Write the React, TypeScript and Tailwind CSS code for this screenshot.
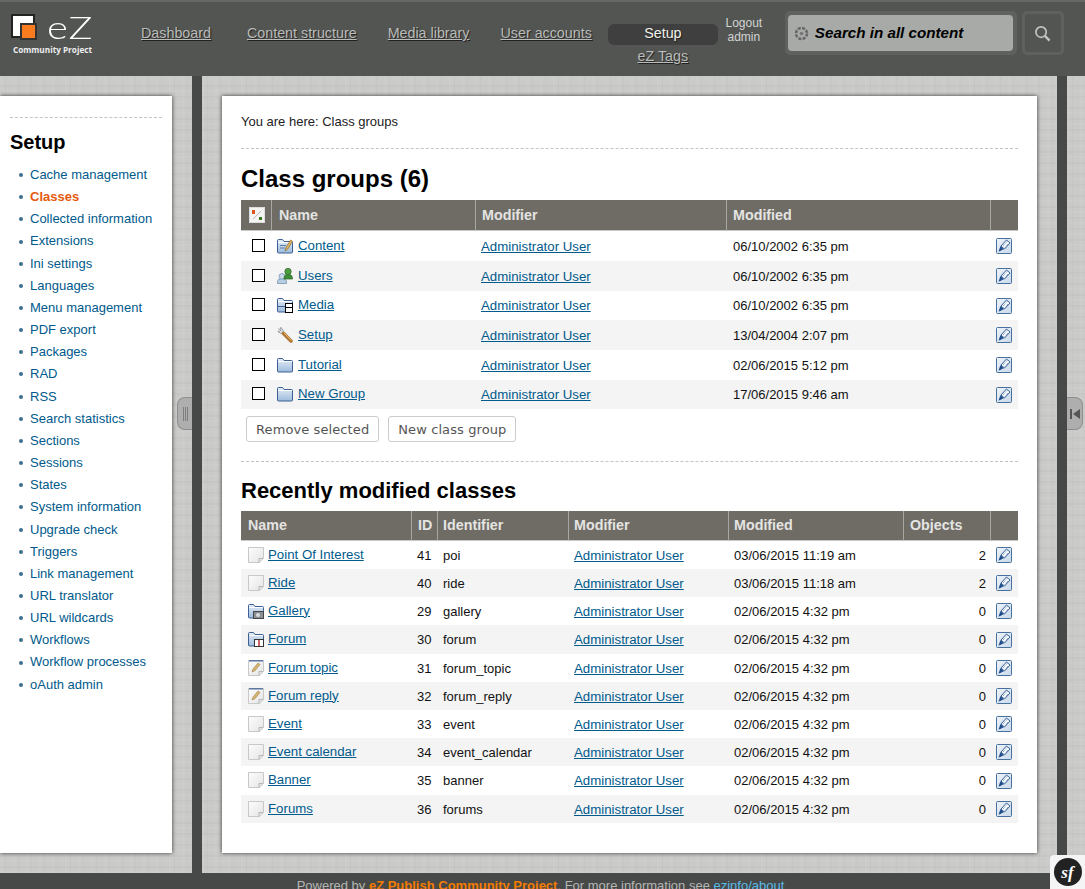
import React from "react";

const linen =
  "bg-[#cacac8] bg-[image:repeating-linear-gradient(0deg,rgba(255,255,255,.04)_0_2px,transparent_2px_5px,rgba(0,0,0,.02)_5px_7px,transparent_7px_11px),repeating-linear-gradient(90deg,rgba(255,255,255,.04)_0_2px,transparent_2px_5px,rgba(0,0,0,.025)_5px_6px,transparent_6px_13px)]";
const link = "text-[13.25px] text-[#005a8c] underline";

function Folder({ children }: { children?: React.ReactNode }) {
  return (
    <svg width="16" height="16" viewBox="0 0 16 16" className="block">
      <defs>
        <linearGradient id="fg" x1="0" y1="0" x2="0" y2="1">
          <stop offset="0" stopColor="#e3edf7" />
          <stop offset="1" stopColor="#9dbbdc" />
        </linearGradient>
      </defs>
      <path d="M.5 14V2.500q0-1 1-1h4l1.500 2h7.500q1 0 1 1V14q0 1-1 1h-13q-1 0-1-1z" fill="url(#fg)" stroke="#3d5f94" />
      <path d="M1 4.500h14" stroke="#fff" />
      {children}
    </svg>
  );
}

function Page({ pencil }: { pencil?: boolean }) {
  return (
    <svg width="16" height="16" viewBox="0 0 16 16" className="block">
      <defs>
        <linearGradient id="pg" x1="0" y1="0" x2="1" y2="1">
          <stop offset="0" stopColor="#fdfdfd" />
          <stop offset="1" stopColor="#e4e4e4" />
        </linearGradient>
      </defs>
      <path d="M.5.500h15v11l-4 4H.5z" fill="url(#pg)" stroke="#c8c8c8" />
      <path d="M15 11.500h-4v4" fill="#e6e6e6" stroke="#b5b5b5" />
      {pencil && <path d="M1 .800h14" stroke="#51709f" strokeWidth="1.400" />}
      {pencil && <path d="M4 12l1-3 5-6 2 1.500-5 6.200z" fill="#d7b46c" stroke="#9c8350" strokeWidth=".6" />}
    </svg>
  );
}

function RowIcon({ kind }: { kind: string }) {
  if (kind === "page") return <Page />;
  if (kind === "pencil") return <Page pencil />;
  if (kind === "folder") return <Folder />;
  if (kind === "content")
    return (
      <Folder>
        <path d="M3 7.500h6M3 10h5" stroke="#5f7ea8" />
        <path d="M8 13l1-3.500 4.500-7.500 2 1.200-4.500 7.600z" fill="#e0b45c" stroke="#8b6d33" strokeWidth=".7" />
      </Folder>
    );
  if (kind === "media")
    return (
      <Folder>
        <path d="M1 9.500h7" stroke="#3d5f94" />
        <rect x="8.500" y="6.500" width="7" height="9" fill="#fff" stroke="#000" />
        <path d="M8.500 10.500h7" stroke="#000" />
      </Folder>
    );
  if (kind === "gallery")
    return (
      <Folder>
        <rect x="5.500" y="8.500" width="10" height="7" fill="#8b8f92" stroke="#44484c" />
        <circle cx="10" cy="12" r="2" fill="#d9dcde" />
      </Folder>
    );
  if (kind === "forum")
    return (
      <Folder>
        <rect x="6.500" y="8.500" width="9" height="7" fill="#fff" stroke="#333" />
        <path d="M11 9v6" stroke="#b4232a" strokeWidth="1.400" />
      </Folder>
    );
  if (kind === "users")
    return (
      <svg width="16" height="16" viewBox="0 0 16 16" className="block">
        <circle cx="5" cy="8.500" r="3" fill="#c8d9ea" stroke="#6c8bab" strokeWidth=".7" />
        <path d="M.5 15.500v-2q0-2.500 3-2.500h3q3 0 3 2.500v2z" fill="#b7cde2" stroke="#6c8bab" strokeWidth=".7" />
        <circle cx="11" cy="3.500" r="3.200" fill="#4f9b41" stroke="#2a6a25" strokeWidth=".7" />
        <path d="M7 11q0-4.500 3-4.500h2q3.500 0 3.500 4.500z" fill="#3f8c36" stroke="#2a6a25" strokeWidth=".7" />
      </svg>
    );
  return (
    <svg width="16" height="16" viewBox="0 0 16 16" className="block">
      <path d="M1 1.500l2.500 2M.8 4.500l3 2 2-.5.500-2-1.800-3.200-1.500 0 1 2.200-1.200 1.200z" fill="#dfe2e5" stroke="#8c9298" strokeWidth=".8" />
      <path d="M6.500 6.500l7.500 7.500" stroke="#b07a36" strokeWidth="3.600" strokeLinecap="round" />
      <path d="M7 6l7.500 7.500" stroke="#e0b070" strokeWidth="1" />
    </svg>
  );
}

function EditIcon() {
  return (
    <svg width="16" height="16" viewBox="0 0 16 16" className="block">
      <defs>
        <linearGradient id="eg" x1="0" y1="0" x2="1" y2="1">
          <stop offset="0" stopColor="#eef3f9" />
          <stop offset="1" stopColor="#c9d9ea" />
        </linearGradient>
      </defs>
      <rect x=".5" y=".5" width="15" height="15" rx="1" fill="url(#eg)" stroke="#47709f" />
      <path d="M5 8l5.500-6 3.500 3-5.500 6z" fill="#fff" stroke="#1f4e8a" strokeWidth=".9" />
      <path d="M7 8l4-4.500M9 9.500l3.500-4" stroke="#5d86b8" strokeWidth="1" strokeDasharray="1 .8" />
      <path d="M2.500 13.500l2-5.500 3.500 3.200-2 .800-1.500 1z" fill="#1f4e8a" />
    </svg>
  );
}

const groups = [
  ["Content", "content", "06/10/2002 6:35 pm", "h-[30px]"],
  ["Users", "users", "06/10/2002 6:35 pm", "h-[30px]"],
  ["Media", "media", "06/10/2002 6:35 pm", "h-[29px]"],
  ["Setup", "wrench", "13/04/2004 2:07 pm", "h-[30px]"],
  ["Tutorial", "folder", "02/06/2015 5:12 pm", "h-[30px]"],
  ["New Group", "folder", "17/06/2015 9:46 am", "h-[29px]"],
];

const classes = [
  ["Point Of Interest", "page", "41", "poi", "03/06/2015 11:19 am", "2", "h-[28px]"],
  ["Ride", "page", "40", "ride", "03/06/2015 11:18 am", "2", "h-[28px]"],
  ["Gallery", "gallery", "29", "gallery", "02/06/2015 4:32 pm", "0", "h-[28px]"],
  ["Forum", "forum", "30", "forum", "02/06/2015 4:32 pm", "0", "h-[29px]"],
  ["Forum topic", "pencil", "31", "forum_topic", "02/06/2015 4:32 pm", "0", "h-[28px]"],
  ["Forum reply", "pencil", "32", "forum_reply", "02/06/2015 4:32 pm", "0", "h-[28px]"],
  ["Event", "page", "33", "event", "02/06/2015 4:32 pm", "0", "h-[28px]"],
  ["Event calendar", "page", "34", "event_calendar", "02/06/2015 4:32 pm", "0", "h-[28px]"],
  ["Banner", "page", "35", "banner", "02/06/2015 4:32 pm", "0", "h-[29px]"],
  ["Forums", "page", "36", "forums", "02/06/2015 4:32 pm", "0", "h-[28px]"],
];

const sideItems = [
  "Cache management", "Classes", "Collected information", "Extensions", "Ini settings", "Languages",
  "Menu management", "PDF export", "Packages", "RAD", "RSS", "Search statistics", "Sections", "Sessions",
  "States", "System information", "Upgrade check", "Triggers", "Link management", "URL translator",
  "URL wildcards", "Workflows", "Workflow processes", "oAuth admin",
];

function Th({ children, className = "" }: { children?: React.ReactNode; className?: string }) {
  return (
    <th className={`border-b border-l border-b-[#c9c9c7] border-l-[#a9a7a3] first:border-l-0 px-[6px] text-left font-bold text-[14.3px] text-[#e4e4e2] ${className}`}>
      {children}
    </th>
  );
}

function Gutter() {
  return <div className="w-[10px] shrink-0 bg-[#464947]" />;
}

function NameCell({ name, icon, gap }: { name: string; icon: string; gap: string }) {
  return (
    <span className={`flex items-center -translate-y-px ${gap}`}>
      <RowIcon kind={icon} />
      <a className={link}>{name}</a>
    </span>
  );
}

export default function App() {
  return (
    <div className="relative flex h-[889px] w-[1085px] flex-col overflow-hidden bg-[#535553] font-['Liberation_Sans',Arial,sans-serif] text-[13px] text-[#111]">
      {/* header */}
      <header className="flex h-[76px] shrink-0 items-start border-t-2 border-[#666866] bg-[#535553]">
        <div className="ml-[11px] mt-[11px] w-[95px] shrink-0">
          <div className="flex h-[27px] items-center">
            <div className="relative h-[25px] w-[27px] shrink-0">
              <div className="h-[24px] w-[24px] border-2 border-[#222] bg-white" />
              <div className="absolute left-[9px] top-[9px] h-[17px] w-[17px] border-2 border-[#333] bg-[#fb7c1e]" />
            </div>
            <span className="ml-[9px] origin-left scale-x-[1.25] font-['Lato',sans-serif] text-[32px] font-light leading-none tracking-[1px] text-white">eZ</span>
          </div>
          <div className="ml-[2px] mt-[4px] whitespace-nowrap font-['Open_Sans',sans-serif] text-[8.2px] font-bold leading-[12px] text-[#eee]">Community Project</div>
        </div>
        <nav className="ml-[35px] mt-[20px] flex shrink-0 items-start text-[14.3px] leading-[22px] text-[#b9bcb9] [text-shadow:1px_1px_1px_#222]">
          <a className="underline">Dashboard</a>
          <a className="ml-[36px] underline">Content structure</a>
          <a className="ml-[31px] underline">Media library</a>
          <a className="ml-[31px] underline">User accounts</a>
          <div className="ml-[16px] flex w-[110px] flex-col items-center">
            <div className="mt-[2px] h-[21px] w-full rounded-[6px] bg-[#3f3f3f] text-center leading-[19px] text-[#f2f2ea]">Setup</div>
            <a className="underline">eZ Tags</a>
          </div>
        </nav>
        <div className="ml-[7px] mt-[14px] w-[38px] shrink-0 text-center text-[12px] leading-[14px] text-[#d2d4d2]">
          <div>Logout</div>
          <div>admin</div>
        </div>
        <div className="ml-[22px] mt-[9px] flex h-[44px] w-[232px] shrink-0 items-center rounded-[5px] bg-[#5f615f] pl-[3px]">
          <div className="flex h-[36px] w-[225px] items-center gap-[6px] rounded-[4px] bg-[#a8aaa8] pl-[6px]">
            <svg width="15" height="15" viewBox="0 0 15 15" className="shrink-0">
              <circle cx="7.500" cy="7.500" r="5.500" fill="none" stroke="#666" strokeWidth="2.500" strokeDasharray="3 1.300" />
              <circle cx="7.500" cy="7.500" r="1.800" fill="#777" />
            </svg>
            <span className="text-[15.2px] font-bold italic text-black">Search in all content</span>
          </div>
        </div>
        <div className="ml-[5px] mt-[9px] flex h-[44px] w-[42px] shrink-0 items-center justify-center rounded-[5px] border-[3px] border-[#5f615f]">
          <svg width="17" height="17" viewBox="0 0 18 18" fill="none">
            <circle cx="7.500" cy="7.500" r="5.500" stroke="#c2c4c2" strokeWidth="1.800" />
            <path d="M11.500 11.500l5 5" stroke="#c2c4c2" strokeWidth="2.600" />
          </svg>
        </div>
      </header>

      {/* body */}
      <div className="flex h-[797px] shrink-0">
        <aside className={`w-[192px] shrink-0 pb-[20px] pr-[20px] pt-[20px] ${linen}`}>
          <div className="h-full bg-white pl-[10px] pr-[10px] pt-[21px] shadow-[0_0_4px_rgba(0,0,0,.75)]">
            <div className="border-t border-dashed border-[#c4c4c4]" />
            <h2 className="mt-[12px] text-[20px] font-bold leading-[24px] text-black">Setup</h2>
            <ul className="mt-[10px] leading-[22.16px]">
              {sideItems.map((s) => (
                <li key={s} className="flex items-center pl-[9px]">
                  <span className="mr-[7px] h-[4px] w-[4px] shrink-0 rounded-full bg-[#3d6f8e]" />
                  <a className={s === "Classes" ? "font-bold text-[#e65a0e]" : "text-[#005a8c]"}>{s}</a>
                </li>
              ))}
            </ul>
          </div>
        </aside>
        <Gutter />
        <main className={`w-[855px] shrink-0 px-[20px] py-[20px] ${linen}`}>
          <div className="h-full bg-white px-[19px] pt-[18px] shadow-[0_0_4px_rgba(0,0,0,.75)]">
            <p className="leading-[15px] text-[#222]">You are here: Class groups</p>
            <div className="mt-[19px] border-t border-dashed border-[#c4c4c4]" />
            <h1 className="mt-[16px] text-[24px] font-bold leading-[28px] text-black">Class groups (6)</h1>
            <table className="mt-[7px] w-[777px] table-fixed border-separate border-spacing-0">
              <colgroup>
                <col className="w-[30px]" />
                <col className="w-[204px]" />
                <col className="w-[251px]" />
                <col className="w-[264px]" />
                <col className="w-[28px]" />
              </colgroup>
              <thead>
                <tr className="h-[31px] bg-[#6f6c66]">
                  <Th className="!p-0">
                    <svg width="16" height="16" viewBox="0 0 16 16" className="ml-[8px]">
                      <rect x=".5" y=".5" width="15" height="15" fill="#f4f4f2" stroke="#ddd" />
                      <path d="M4 12L12 4" stroke="#bbb" />
                      <rect x="3" y="3" width="3" height="4" fill="#e0521c" />
                      <rect x="10" y="10" width="3" height="3" fill="#37761d" />
                    </svg>
                  </Th>
                  <Th className="!pl-[7px] pt-px">Name</Th>
                  <Th className="pt-px">Modifier</Th>
                  <Th className="pt-px">Modified</Th>
                  <Th />
                </tr>
              </thead>
              <tbody>
                {groups.map(([name, icon, date, h], i) => (
                  <tr key={name} className={`${h} ${i % 2 ? "bg-[#f4f4f4]" : "bg-white"}`}>
                    <td className="p-0">
                      <span className="ml-[11px] block h-[13px] w-[13px] -translate-y-px border border-black bg-white" />
                    </td>
                    <td className="px-[6px] pt-px"><NameCell name={name} icon={icon} gap="gap-[5px]" /></td>
                    <td className="px-[6px] pt-px"><a className={link}>Administrator User</a></td>
                    <td className="px-[7px] pt-px">{date}</td>
                    <td className="p-0"><span className="ml-[6px] block"><EditIcon /></span></td>
                  </tr>
                ))}
              </tbody>
            </table>
            <div className="mt-[7px] flex gap-[9px] pl-[5px] font-['DejaVu_Sans',sans-serif] text-[13px] text-[#555]">
              <button className="h-[26px] rounded-[3px] border border-[#ccc] bg-white px-[9px] pt-px tracking-[.1px]">Remove selected</button>
              <button className="h-[26px] rounded-[3px] border border-[#ccc] bg-white px-[9px] pt-px tracking-[.1px]">New class group</button>
            </div>
            <div className="mt-[19px] border-t border-dashed border-[#c4c4c4]" />
            <h2 className="mt-[15px] text-[22px] font-bold leading-[28px] text-black">Recently modified classes</h2>
            <table className="mt-[6px] w-[777px] table-fixed border-separate border-spacing-0">
              <colgroup>
                <col className="w-[170px]" />
                <col className="w-[26px]" />
                <col className="w-[131px]" />
                <col className="w-[160px]" />
                <col className="w-[175px]" />
                <col className="w-[87px]" />
                <col className="w-[28px]" />
              </colgroup>
              <thead>
                <tr className="h-[30px] bg-[#6f6c66]">
                  <Th className="!pl-[7px]">Name</Th>
                  <Th>ID</Th>
                  <Th className="!pl-[5px]">Identifier</Th>
                  <Th className="!pl-[5px]">Modifier</Th>
                  <Th className="!pl-[5px]">Modified</Th>
                  <Th>Objects</Th>
                  <Th />
                </tr>
              </thead>
              <tbody>
                {classes.map(([name, icon, id, ident, date, obj, h], i) => (
                  <tr key={name} className={`${h} ${i % 2 ? "bg-[#f4f4f4]" : "bg-white"}`}>
                    <td className="px-[7px] pt-px"><NameCell name={name} icon={icon} gap="gap-[4px]" /></td>
                    <td className="px-[6px] pt-px">{id}</td>
                    <td className="px-[6px] pt-px">{ident}</td>
                    <td className="px-[6px] pt-px"><a className={link}>Administrator User</a></td>
                    <td className="px-[6px] pt-px">{date}</td>
                    <td className="pr-[4px] pt-px text-right">{obj}</td>
                    <td className="p-0"><span className="ml-[6px] block"><EditIcon /></span></td>
                  </tr>
                ))}
              </tbody>
            </table>
          </div>
        </main>
        <Gutter />
        <aside className={`flex-1 ${linen}`} />
      </div>

      {/* footer */}
      <footer className="h-[16px] shrink-0 overflow-hidden bg-[#464947] pr-[4px] pt-[5px] text-center text-[13px] leading-[15px] text-[#b5b7b5]">
        Powered by <span className="font-bold text-[#f57c00]">eZ Publish Community Project</span>. For more information see <a className="text-[#5bbbe8]">ezinfo/about</a>
      </footer>

      {/* collapse handles */}
      <div className="absolute left-[177px] top-[397px] flex h-[33px] w-[15px] items-center justify-center gap-[1px] rounded-l-[8px] border border-r-0 border-[#8e8e8e] bg-[#aeaeae]">
        <span className="h-[14px] w-px bg-[#7d7d7d]" />
        <span className="h-[14px] w-px bg-[#7d7d7d]" />
        <span className="h-[14px] w-px bg-[#7d7d7d]" />
      </div>
      <div className="absolute left-[1067px] top-[397px] flex h-[33px] w-[16px] items-center justify-center rounded-r-[8px] border border-l-0 border-[#8e8e8e] bg-[#aeaeae]">
        <svg width="10" height="10" viewBox="0 0 10 10">
          <path d="M0 0h2v10H0zM10 0v10L3 5z" fill="#555" />
        </svg>
      </div>

      {/* debug toolbar badge */}
      <div className="absolute bottom-0 right-0 flex h-[34px] w-[35px] items-center justify-center rounded-tl-[4px] bg-[#f5f5f5]">
        <div className="flex h-[28px] w-[28px] items-center justify-center rounded-full bg-[#222] font-['Liberation_Serif',serif] text-[17px] font-bold italic leading-none text-white">sf</div>
      </div>
    </div>
  );
}
